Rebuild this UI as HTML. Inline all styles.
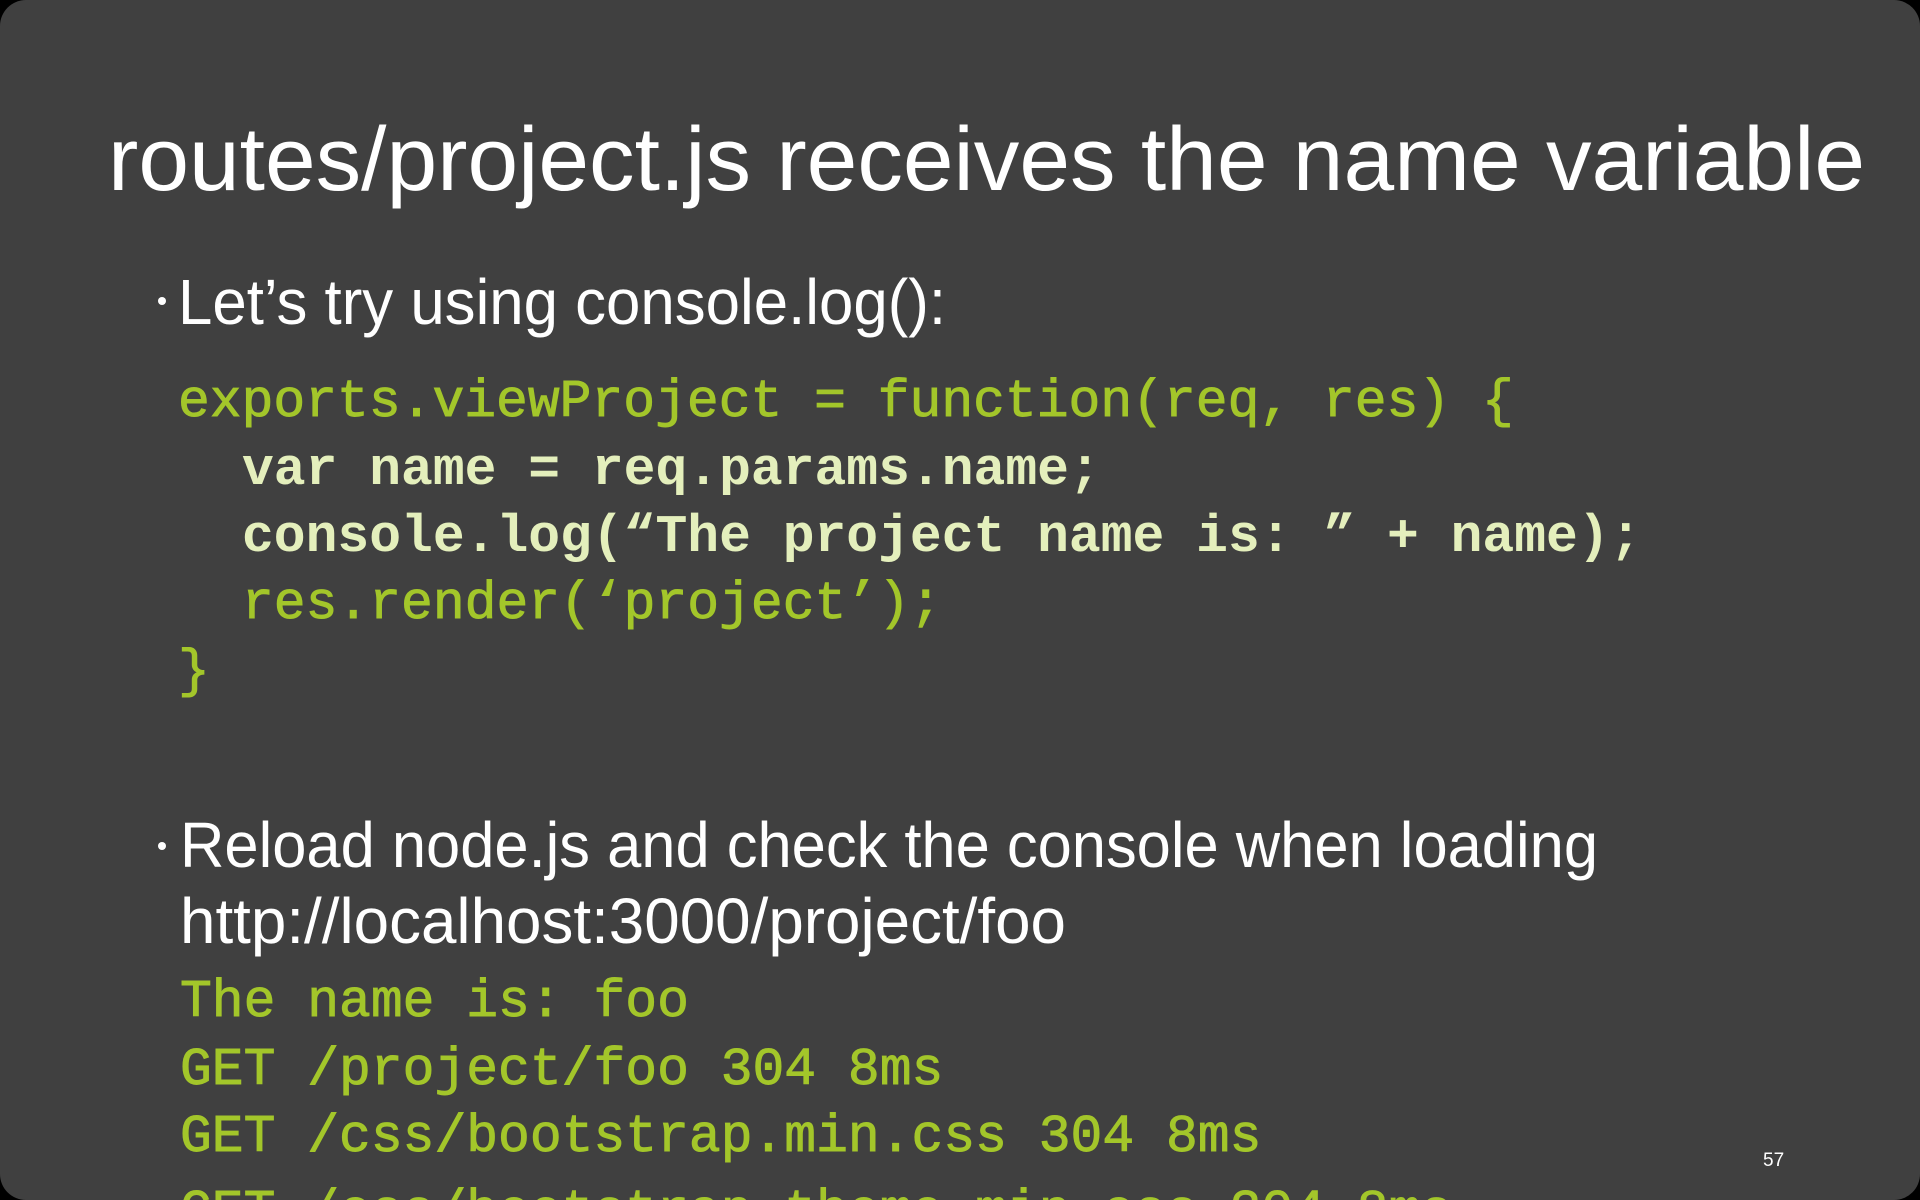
<!DOCTYPE html>
<html><head><meta charset="utf-8"><style>
html,body{margin:0;padding:0;background:#000;width:1920px;height:1200px;overflow:hidden}
.s{position:absolute;left:0;top:0;width:1920px;height:1200px;background:#404040;border-radius:26px}
svg{position:absolute;left:0;top:0}
</style></head><body>
<div class="s"></div>
<svg width="1920" height="1200" viewBox="0 0 1920 1200">
<g font-family="'Liberation Sans', sans-serif" fill="#ffffff">
<text x="108" y="190" font-size="90" textLength="1757" lengthAdjust="spacingAndGlyphs">routes/project.js receives the name variable</text>
<circle cx="162" cy="301" r="4"/>
<text x="178" y="324" font-size="64" textLength="768" lengthAdjust="spacingAndGlyphs">Let’s try using console.log():</text>
<circle cx="162" cy="846" r="4"/>
<text x="180" y="867" font-size="64" textLength="1418" lengthAdjust="spacingAndGlyphs">Reload node.js and check the console when loading</text>
<text x="180" y="943" font-size="64" textLength="886" lengthAdjust="spacingAndGlyphs">http://localhost:3000/project/foo</text>
</g>
<g font-family="'Liberation Mono', monospace" font-size="53" fill="#a3c62a" stroke="#a3c62a" stroke-width="0.9" xml:space="preserve">
<text x="178" y="416">exports.viewProject = function(req, res) {</text>
<text x="242" y="484" font-weight="bold" fill="#e4efbc" stroke="none">var name = req.params.name;</text>
<text x="242" y="551" font-weight="bold" fill="#e4efbc" stroke="none">console.log(“The project name is: ” + name);</text>
<text x="242" y="618">res.render(‘project’);</text>
<text x="178" y="686">}</text>
<text x="180" y="1016">The name is: foo</text>
<text x="180" y="1084">GET /project/foo 304 8ms</text>
<text x="180" y="1151">GET /css/bootstrap.min.css 304 8ms</text>
<text x="180" y="1226">GET /css/bootstrap-theme.min.css 304 8ms</text>
</g>
<text x="1763" y="1166" font-family="'Liberation Sans', sans-serif" font-size="19" fill="#ffffff">57</text>
</svg>
</body></html>
